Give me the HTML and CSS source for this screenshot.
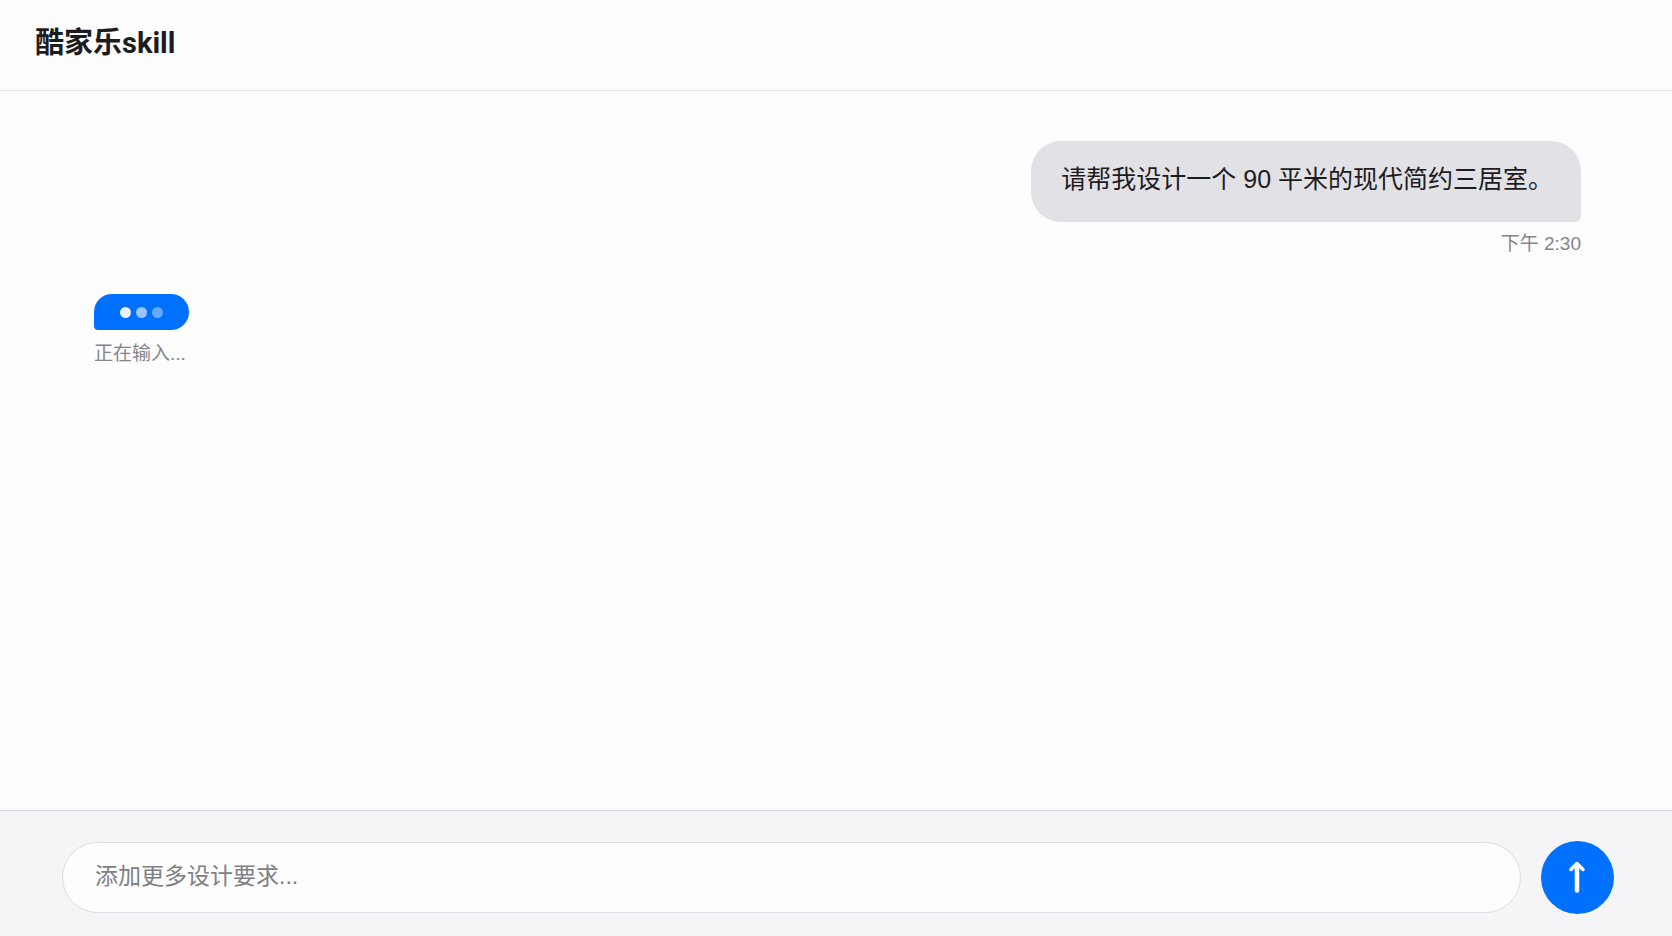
FILE: index.html
```html
<!DOCTYPE html>
<html lang="zh-CN">
<head>
    <meta charset="UTF-8">
    <meta name="viewport" content="width=device-width, initial-scale=1.0">
    <title>酷家乐skill</title>
    <link rel="stylesheet" href="styles.css">
</head>
<body>
    <header class="header">
        <h1>酷家乐skill</h1>
    </header>

    <main class="messages">
        <div class="message user">
            <div class="bubble">请帮我设计一个 90 平米的现代简约三居室。</div>
            <div class="meta">下午 2:30</div>
        </div>

        <div class="message assistant">
            <div class="typing">
                <span class="dot"></span>
                <span class="dot"></span>
                <span class="dot"></span>
            </div>
            <div class="meta">正在输入...</div>
        </div>
    </main>

    <form class="composer" onsubmit="return false">
        <input class="composer-input" type="text" placeholder="添加更多设计要求..." aria-label="添加更多设计要求">
        <button class="send" type="submit" aria-label="发送">
            <svg width="20" height="36" viewBox="0 0 20 36" fill="none" stroke="#fff" stroke-linecap="round" stroke-linejoin="round">
                <path stroke-width="4.5" d="M9 30.500V5"/>
                <path stroke-width="3.500" d="M3 9.500l6-6 6 6"/>
            </svg>
        </button>
    </form>
</body>
</html>
```
FILE: styles.css
```css
* {
    box-sizing: border-box;
}

body {
    margin: 0;
    min-height: 100vh;
    display: flex;
    flex-direction: column;
    background-color: #fdfdfd;
    color: #1c1c1e;
    font-family: "Liberation Sans", "Noto Sans CJK SC", sans-serif;
}

.header {
    padding: 25px 35px 29px;
    border-bottom: 1px solid #e4e4e4;
}

.header h1 {
    margin: 0;
    font-family: Roboto, "Noto Sans CJK SC", sans-serif;
    font-size: 29px;
    line-height: 36px;
    font-weight: bold;
}

/* Conversation */
.messages {
    flex: 1;
    display: flex;
    flex-direction: column;
    gap: 37px;
    padding: 50px 91px 50px 94px;
}

.message {
    display: flex;
    flex-direction: column;
}

.message.user {
    align-items: flex-end;
}

.message.assistant {
    align-items: flex-start;
}

.bubble {
    padding: 21px 28px 25px 30px;
    border-radius: 30px 30px 6px 30px;
    background-color: #e2e2e6;
    font-size: 25px;
    line-height: 35px;
}

.meta {
    margin-top: 9px;
    color: #858589;
    font-size: 19px;
    line-height: 26px;
}

/* Typing indicator */
.typing {
    display: flex;
    align-items: center;
    gap: 5px;
    height: 36px;
    margin-bottom: 2px;
    padding: 0 26px;
    border-radius: 18px 18px 18px 4px;
    background-color: #0070ff;
}

.dot {
    width: 11px;
    height: 11px;
    border-radius: 50%;
    background-color: #fff;
    opacity: 0.9;
}

.dot:nth-child(2) {
    opacity: 0.6;
}

.dot:nth-child(3) {
    opacity: 0.4;
}

/* Input bar */
.composer {
    display: flex;
    align-items: center;
    gap: 20px;
    padding: 30px 58px 22px 62px;
    border-top: 1px solid #dcdce0;
    background-color: #f5f5f8;
}

.composer-input {
    flex: 1;
    min-width: 0;
    height: 71px;
    padding: 0 32px 2px;
    border: 1px solid #dcdce2;
    border-radius: 36px;
    background-color: #fdfdfd;
    color: #1c1c1e;
    font-family: inherit;
    font-size: 23px;
    outline: none;
}

.composer-input::placeholder {
    color: #808084;
    opacity: 1;
}

.send {
    display: flex;
    align-items: center;
    justify-content: center;
    width: 73px;
    height: 73px;
    padding: 0;
    border: none;
    border-radius: 50%;
    background-color: #0070ff;
    cursor: pointer;
}
```
